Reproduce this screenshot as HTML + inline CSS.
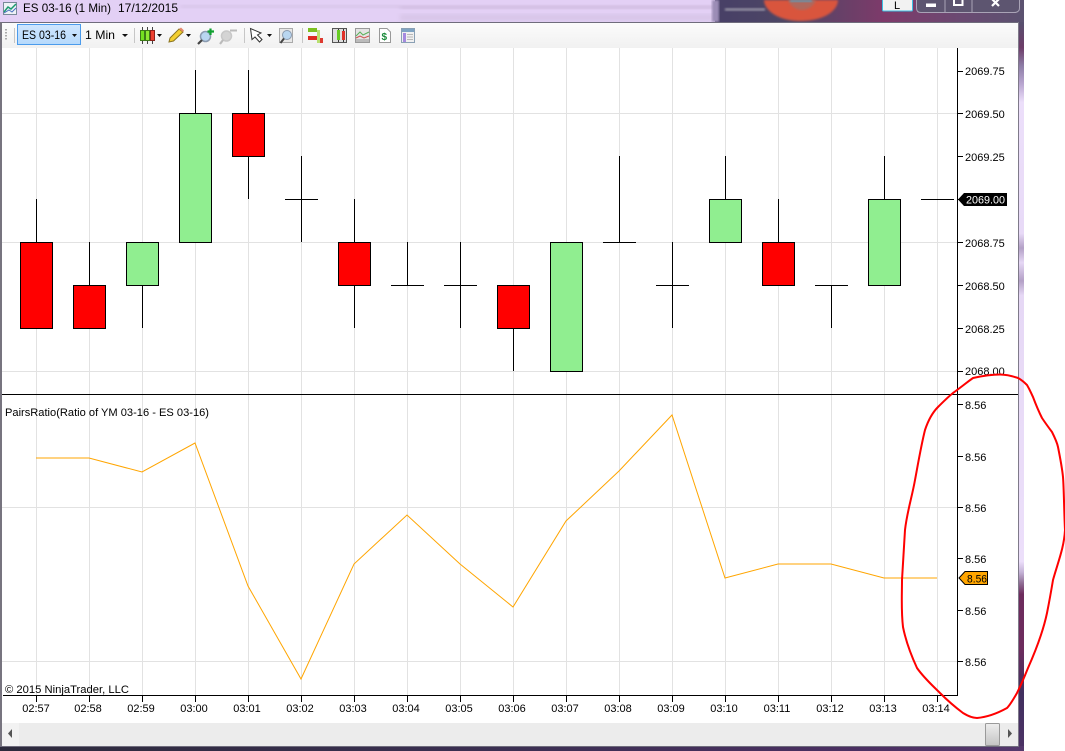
<!DOCTYPE html>
<html><head><meta charset="utf-8">
<style>
html,body{margin:0;padding:0;background:#fff;width:1065px;height:751px;overflow:hidden}
svg{display:block;position:absolute;left:0;top:0}
text{font-family:"Liberation Sans",sans-serif;font-size:11px;fill:#000}
.t text{text-anchor:middle}
</style></head><body>
<svg width="1065" height="751" viewBox="0 0 1065 751" xmlns="http://www.w3.org/2000/svg">
<defs>
<linearGradient id="tb" x1="0" y1="0" x2="0" y2="1"><stop offset="0" stop-color="#fbfbfb"/><stop offset="1" stop-color="#f1f1f1"/></linearGradient>
<linearGradient id="fr" x1="0" y1="0" x2="0" y2="1">
<stop offset="0" stop-color="#57506e"/><stop offset=".035" stop-color="#6d3c68"/><stop offset=".06" stop-color="#8d7da6"/><stop offset=".085" stop-color="#b9a6d0"/><stop offset=".11" stop-color="#ecdffa"/>
<stop offset=".29" stop-color="#e8daf7"/><stop offset=".31" stop-color="#b3a0c6"/><stop offset=".33" stop-color="#e6d8f5"/><stop offset=".355" stop-color="#b3a0c6"/><stop offset=".375" stop-color="#e6d8f5"/>
<stop offset=".74" stop-color="#ecdffa"/><stop offset=".755" stop-color="#c4b2d6"/><stop offset=".77" stop-color="#8f6d94"/><stop offset=".785" stop-color="#6d2c5d"/><stop offset=".86" stop-color="#6d2c5d"/><stop offset=".92" stop-color="#41305f"/><stop offset="1" stop-color="#4c3265"/>
</linearGradient>
<linearGradient id="tbar" x1="0" y1="0" x2="1" y2="0"><stop offset="0" stop-color="#473f66"/><stop offset=".25" stop-color="#4e4765"/><stop offset=".55" stop-color="#7e3a6a"/><stop offset=".8" stop-color="#6a4a72"/><stop offset="1" stop-color="#5b5270"/></linearGradient>
<linearGradient id="bot" x1="0" y1="0" x2="1" y2="0"><stop offset="0" stop-color="#2c2a3c"/><stop offset=".5" stop-color="#3b2f52"/><stop offset=".85" stop-color="#4b2f62"/><stop offset="1" stop-color="#54386c"/></linearGradient>
<linearGradient id="th" x1="0" y1="0" x2="0" y2="1"><stop offset="0" stop-color="#eeeeee"/><stop offset="1" stop-color="#c4c4c4"/></linearGradient>
<linearGradient id="sel" x1="0" y1="0" x2="0" y2="1"><stop offset="0" stop-color="#cfe6ff"/><stop offset="1" stop-color="#b6d9fb"/></linearGradient>
<filter id="b3"><feGaussianBlur stdDeviation="2.5"/></filter>
<filter id="b1"><feGaussianBlur stdDeviation="1"/></filter>
</defs>

<!-- title bar -->
<rect x="0" y="0" width="1024" height="22" fill="#e3d0f5"/>
<rect x="180" y="5" width="535" height="3" fill="#d4c1e4" filter="url(#b3)"/>
<rect x="400" y="6" width="315" height="3" fill="#cdb9dd" filter="url(#b3)"/>
<rect x="400" y="14" width="315" height="7" fill="#d8c6e8" filter="url(#b3)"/>
<rect x="715" y="0" width="309" height="22" fill="url(#tbar)"/>
<rect x="712" y="0" width="7" height="22" fill="#9c8db6" filter="url(#b1)"/>
<rect x="725" y="8" width="40" height="3" fill="#8c889c" filter="url(#b1)"/>
<path d="M764 0H838C838 10 825 21 800 21C778 21 764 10 764 0Z" fill="#d9553c" filter="url(#b1)"/>
<path d="M788 0H816C814 6 808 10 802 10C796 10 790 6 788 0Z" fill="#b0685c" filter="url(#b1)"/>
<rect x="790" y="0" width="22" height="2" fill="#5a9dbb" filter="url(#b1)"/>

<!-- window buttons -->
<rect x="882.500" y="-2" width="30" height="13" rx="1" fill="#f2f2f2" stroke="#3cc0e4"/>
<text x="894" y="9" style="font-size:11px">L</text>
<path d="M916.500 0V8Q916.500 12.500 921 12.500H1014Q1019.500 12.500 1019.500 8V0" fill="#5d5570" stroke="#a9a3b6"/>
<path d="M945 0V12M972 0V12" stroke="#a9a3b6"/>
<rect x="926" y="3.500" width="10" height="3.500" fill="#fff"/>
<path d="M954 -1H962.500V5H954Z" fill="none" stroke="#fff" stroke-width="2"/>
<path d="M992 -1L999 6M999 -1L992 6" stroke="#fff" stroke-width="2.200"/>

<!-- right frame -->
<rect x="1018" y="22" width="6" height="729" fill="url(#fr)"/>
<rect x="0" y="22" width="1019" height="1" fill="#6f6c7c"/>
<rect x="0" y="22" width="2" height="725" fill="#77747f"/>
<rect x="1018" y="22" width="1" height="725" fill="#7f7a8a"/>
<rect x="2" y="23" width="1016" height="700" fill="#fff"/>

<!-- toolbar -->
<rect x="2" y="23" width="1016" height="25" fill="url(#tb)"/>
<path d="M6 29v1.500M6 32v1.500M6 35v1.500M6 38v1.500" stroke="#aaa" stroke-width="2"/>
<path d="M14.500 28V43" stroke="#c6c6c6"/>
<rect x="17.500" y="24.500" width="63" height="20" fill="url(#sel)" stroke="#4b9bec"/>
<text x="22" y="39" style="font-size:12px" textLength="44" lengthAdjust="spacingAndGlyphs">ES 03-16</text>
<path d="M72 34h5l-2.500 3z" fill="#111"/>
<text x="85" y="39" style="font-size:12px" textLength="30" lengthAdjust="spacingAndGlyphs">1 Min</text>
<path d="M122 34h6l-3 3z" fill="#111"/>
<path d="M134.500 28V43" stroke="#c6c6c6"/>
<path d="M142.500 27V44M147.500 27V44M152.500 27V44" stroke="#444"/>
<rect x="140.500" y="30.500" width="4" height="10" fill="#74e020" stroke="#3d7a18"/>
<rect x="145.500" y="30.500" width="4" height="10" fill="#8ee832" stroke="#3d7a18"/>
<rect x="150.500" y="30.500" width="4" height="10" fill="#ee4030" stroke="#8a2018"/>
<path d="M157 34h5l-2.500 3z" fill="#111"/>
<path d="M170 38L179 29L183 32L173.500 41L169 42Z" fill="#f3cf30" stroke="#8a7420"/>
<path d="M179 29L181 27.500L184 30.500L183 32Z" fill="#e58a70"/>
<path d="M186 34h5l-2.500 3z" fill="#111"/>
<circle cx="205.500" cy="36.500" r="5" fill="#b9d6f0" stroke="#8b9bb0" stroke-width="1.500"/>
<path d="M202 40L198 44" stroke="#444" stroke-width="2.200"/>
<path d="M207.500 31.500h6.500M210.500 28.500v6.500" stroke="#10a030" stroke-width="2.200"/>
<circle cx="226.500" cy="36" r="5" fill="#d4d4d4" stroke="#c8c8c8" stroke-width="1.500"/>
<path d="M223 40L220 44" stroke="#bbb" stroke-width="2.200"/>
<path d="M230 30.500h7" stroke="#bbb" stroke-width="2"/>
<path d="M244.500 28V43" stroke="#c6c6c6"/>
<path d="M250.500 28.500L252 39.500L255 37L259.500 42L262 39.500L257.500 35L261 33Z" fill="#fff" stroke="#333"/>
<path d="M267 34h5l-2.500 3z" fill="#111"/>
<rect x="279.500" y="28.500" width="13" height="14" fill="#e8e8e8" stroke="#aaa"/>
<circle cx="287" cy="35" r="4.500" fill="#b9d6f0" stroke="#8b9bb0"/>
<path d="M284 38.500L280.500 43" stroke="#444" stroke-width="2"/>
<path d="M302.500 28V43" stroke="#c6c6c6"/>
<rect x="308" y="28" width="9" height="4" fill="#7cc020"/>
<rect x="308" y="36" width="9" height="4" fill="#dd2a20"/>
<rect x="317" y="30" width="3" height="13" fill="#b9e070"/>
<rect x="320" y="38" width="3" height="5" fill="#dd3a30"/>
<rect x="332.500" y="28.500" width="14" height="14" fill="#ddd" stroke="#555"/>
<path d="M338.500 29V42M343.500 29V42" stroke="#333"/>
<rect x="337" y="30" width="3" height="10" fill="#66cc22"/>
<rect x="342" y="31" width="3" height="9" fill="#e03028"/>
<rect x="355.500" y="28.500" width="14" height="14" fill="#e4e4e4" stroke="#999"/>
<path d="M356 36L360 32L363 35L369 32" fill="none" stroke="#5ab05a"/>
<path d="M356 38L360 36L364 38L369 36" fill="none" stroke="#d05050"/>
<rect x="356" y="39" width="13" height="3" fill="#bbb"/>
<path d="M379.500 28.500H387L390.500 32V42.500H379.500Z" fill="#fff" stroke="#999"/>
<text x="381.500" y="40" style="font-size:10px;font-weight:bold;fill:#1a8a3a">$</text>
<rect x="401.500" y="28.500" width="13" height="14" fill="#f0f0f0" stroke="#8aa0b4"/>
<rect x="402" y="29" width="12" height="3" fill="#7fa4c4"/>
<rect x="403" y="33" width="3" height="9" fill="#a58ae0"/>
<path d="M407 34.500h6M407 37h6M407 39.500h6" stroke="#b8b8b8"/>

<!-- grid -->
<path d="M36.500 48V695M89.500 48V695M142.500 48V695M195.500 48V695M248.500 48V695M301.500 48V695M354.500 48V695M407.500 48V695M460.500 48V695M513.500 48V695M566.500 48V695M619.500 48V695M672.500 48V695M725.500 48V695M778.500 48V695M831.500 48V695M884.500 48V695M937.500 48V695" stroke="#e2e2e2"/>
<path d="M2 113.500H957M2 242.500H957M2 371.500H957M2 507.500H957M2 661.500H957" stroke="#e2e2e2"/>

<!-- wicks -->
<path d="M36.500 199V242M89.500 242V285M142.500 285V328M195.500 70V113M248.500 70V113M248.500 156V199M301.500 156V242M354.500 199V242M354.500 285V328M407.500 242V285M460.500 242V328M513.500 328V371M619.500 156V242M672.500 242V328M725.500 156V199M778.500 199V242M831.500 285V328M884.500 156V199" stroke="#000"/>
<path d="M285 199.500H318M391 285.500H424M444 285.500H477M603 242.500H636M656 285.500H689M815 285.500H848M921 199.500H954" stroke="#000"/>

<!-- bodies -->
<g stroke="#000" stroke-width="1">
<rect x="20.500" y="242.500" width="32" height="86" fill="#ff0000"/>
<rect x="73.500" y="285.500" width="32" height="43" fill="#ff0000"/>
<rect x="126.500" y="242.500" width="32" height="43" fill="#90ee90"/>
<rect x="179.500" y="113.500" width="32" height="129" fill="#90ee90"/>
<rect x="232.500" y="113.500" width="32" height="43" fill="#ff0000"/>
<rect x="338.500" y="242.500" width="32" height="43" fill="#ff0000"/>
<rect x="497.500" y="285.500" width="32" height="43" fill="#ff0000"/>
<rect x="550.500" y="242.500" width="32" height="129" fill="#90ee90"/>
<rect x="709.500" y="199.500" width="32" height="43" fill="#90ee90"/>
<rect x="762.500" y="242.500" width="32" height="43" fill="#ff0000"/>
<rect x="868.500" y="199.500" width="32" height="86" fill="#90ee90"/>
</g>

<!-- indicator line -->
<polyline points="36,458 89,458 142,472 195,443 248,586 301,679 354,564 407,515 460,564 513,607 566,521 619,471 672,415 725,578 778,564 831,564 884,578 937,578" fill="none" stroke="#ffa500" stroke-width="1"/>

<!-- axes -->
<path d="M2 394.500H1018M3 695.500H958M957.500 48V696" stroke="#000"/>
<path d="M958 71.500h5M958 113.500h5M958 156.500h5M958 199.500h5M958 242.500h5M958 285.500h5M958 328.500h5M958 371.500h5M958 404.500h5M958 456.500h5M958 507.500h5M958 558.500h5M958 610.500h5M958 661.500h5" stroke="#000"/>
<path d="M36.500 696v6M89.500 696v6M142.500 696v6M195.500 696v6M248.500 696v6M301.500 696v6M354.500 696v6M407.500 696v6M460.500 696v6M513.500 696v6M566.500 696v6M619.500 696v6M672.500 696v6M725.500 696v6M778.500 696v6M831.500 696v6M884.500 696v6M937.500 696v6" stroke="#000"/>

<!-- axis labels -->
<text x="965" y="75">2069.75</text>
<text x="965" y="118">2069.50</text>
<text x="965" y="161">2069.25</text>
<text x="965" y="247">2068.75</text>
<text x="965" y="290">2068.50</text>
<text x="965" y="333">2068.25</text>
<text x="965" y="375">2068.00</text>
<text x="965" y="409">8.56</text>
<text x="965" y="461">8.56</text>
<text x="965" y="512">8.56</text>
<text x="965" y="563">8.56</text>
<text x="965" y="615">8.56</text>
<text x="965" y="666">8.56</text>

<path d="M958 199.500L964 193H1007V206H964Z" fill="#000"/>
<text x="966" y="203.500" style="fill:#fff" textLength="39" lengthAdjust="spacingAndGlyphs">2069.00</text>
<path d="M959 578L965 571.500H987.500V584.500H965Z" fill="#ffa500" stroke="#000"/>
<text x="967" y="582.500" textLength="20" lengthAdjust="spacingAndGlyphs">8.56</text>

<text x="5" y="416" textLength="204" lengthAdjust="spacingAndGlyphs">PairsRatio(Ratio of YM 03-16 - ES 03-16)</text>
<text x="5" y="693" textLength="124" lengthAdjust="spacingAndGlyphs">© 2015 NinjaTrader, LLC</text>

<g class="t">
<text x="36" y="712">02:57</text><text x="88" y="712">02:58</text><text x="141" y="712">02:59</text><text x="194" y="712">03:00</text><text x="247" y="712">03:01</text><text x="300" y="712">03:02</text><text x="353" y="712">03:03</text><text x="406" y="712">03:04</text><text x="459" y="712">03:05</text><text x="512" y="712">03:06</text><text x="565" y="712">03:07</text><text x="618" y="712">03:08</text><text x="671" y="712">03:09</text><text x="724" y="712">03:10</text><text x="777" y="712">03:11</text><text x="830" y="712">03:12</text><text x="883" y="712">03:13</text><text x="936" y="712">03:14</text>
</g>

<!-- scrollbar -->
<rect x="2" y="723" width="1016" height="23" fill="#ececec"/>
<rect x="2" y="723" width="17" height="23" fill="#f2f2f2"/>
<path d="M12 729V738L8 733.500Z" fill="#555"/>
<rect x="985.500" y="723.500" width="14" height="22" rx="1" fill="url(#th)" stroke="#9a9a9a"/>
<path d="M1008 729V738L1012 733.500Z" fill="#555"/>

<!-- bottom frame -->
<rect x="0" y="746" width="1024" height="5" fill="url(#bot)"/>
<rect x="0" y="746" width="1019" height="1" fill="#6f6c7c"/>

<!-- title icon and text -->
<rect x="3.500" y="2.500" width="13" height="12" fill="#eef2f6" stroke="#7a8a9a"/>
<path d="M4 12L8 7L11 9L16 4" fill="none" stroke="#1c9a70" stroke-width="1.500"/>
<path d="M4 13L9 10L12 12L16 8" fill="none" stroke="#4a70c0"/>
<text x="23" y="12" style="font-size:12px" textLength="88" lengthAdjust="spacingAndGlyphs">ES 03-16 (1 Min)</text>
<text x="118" y="12" style="font-size:12px" textLength="60" lengthAdjust="spacingAndGlyphs">17/12/2015</text>

<!-- red annotation -->
<path d="M1000 374.500C1006 374.500 1012 376 1018 378C1022 380 1025 383 1027 385C1030 390 1031 393 1033 397C1036 405 1039 412 1042 418C1046 424 1049 428 1052 432C1055 438 1057 442 1058 447C1060 457 1062 467 1063 477C1064 490 1064 510 1065 530C1064 548 1058 562 1053 580C1051 592 1049 603 1047 613C1043 632 1036 650 1028 668C1024 678 1020 687 1017 693C1013 700 1010 705 1007 708C998 713 988 717 977 718C972 718 968 716 963 713C955 707 948 701 940 693C932 685 924 678 917 668C911 655 906 642 903 627C901 610 902 595 902 580C903 562 904 545 905 530C907 512 912 497 915 480C918 464 921 446 925 430C928 421 932 413 938 407C943 402 948 397 953 393C960 388 966 383 973 378C982 376 991 374.500 1000 374.500Z" fill="none" stroke="#ff0000" stroke-width="2"/>
</svg>
</body></html>
